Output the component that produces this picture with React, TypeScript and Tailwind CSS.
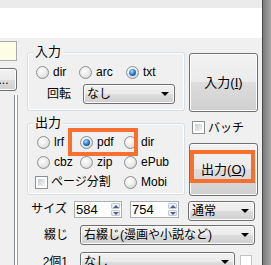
import React from "react";

const btn =
  "border border-[#707070] rounded-[3px] bg-[linear-gradient(#f2f2f2,#ebebeb_50%,#dddddd_50%,#cfcfcf)] shadow-[inset_0_0_0_1px_#fcfcfc]";

function Radio({ label, checked, w }: { label: string; checked?: boolean; w?: string }) {
  return (
    <div className={`flex items-center gap-[4px] h-[20px] ${w ?? ""}`}>
      <span className="w-[13px] h-[13px] shrink-0 rounded-full border border-[#8e8f8f] bg-[radial-gradient(circle_at_40%_35%,#ffffff,#e8e8e8_55%,#c4c4c4)] flex items-center justify-center">
        {checked && (
          <span className="w-[7px] h-[7px] rounded-full bg-[radial-gradient(circle_at_40%_35%,#a4dcff,#1c72c4_55%,#0c3f7a)]" />
        )}
      </span>
      <span>{label}</span>
    </div>
  );
}

function Check({ label }: { label: string }) {
  return (
    <div className="flex items-center gap-[3px] h-[13px]">
      <span className="w-[13px] h-[13px] shrink-0 border border-[#8e8f8f] bg-white p-[2px]">
        <span className="block w-full h-full bg-[linear-gradient(135deg,#c9cdd2,#f4f4f4)]" />
      </span>
      <span>{label}</span>
    </div>
  );
}

function Select({ text, cls }: { text: string; cls: string }) {
  return (
    <div className={`${btn} h-[20px] flex items-center justify-between pl-[3px] pr-[5px] ${cls}`}>
      <span>{text}</span>
      <span className="w-0 h-0 border-x-[4px] border-x-transparent border-t-[4px] border-t-black" />
    </div>
  );
}

function Spin({ value, cls }: { value: string; cls: string }) {
  return (
    <div className={`h-[17px] flex border border-[#abadb3] bg-white ${cls}`}>
      <span className="flex-1 pl-[1px] text-[13px] leading-[15px]">{value}</span>
      <div className="w-[9px] flex flex-col gap-[1px] my-[1px] mr-[1px]">
        <div className="flex-1 flex items-center justify-center border border-[#c3c9d3] rounded-[1px] bg-[linear-gradient(#f5f7fa,#dfe4eb)]">
          <span className="w-0 h-0 border-x-[3px] border-x-transparent border-b-[3px] border-b-[#4d6185]" />
        </div>
        <div className="flex-1 flex items-center justify-center border border-[#c3c9d3] rounded-[1px] bg-[linear-gradient(#f5f7fa,#dfe4eb)]">
          <span className="w-0 h-0 border-x-[3px] border-x-transparent border-t-[3px] border-t-[#4d6185]" />
        </div>
      </div>
    </div>
  );
}

export default function App() {
  return (
    <div className="relative w-[271px] h-[265px] overflow-hidden flex bg-[#f0f0f0] text-[12px] leading-none text-black font-['Liberation_Sans','Noto_Sans_CJK_JP',sans-serif]">
      <div className="w-[262px] flex flex-col shrink-0">
        <div className="h-[8px] shrink-0 bg-[#ebebeb]" />
        <div className="h-[30px] shrink-0 bg-white" />
        <div className="flex flex-1 min-h-0">
          {/* left strip */}
          <div className="w-[18px] shrink-0 flex flex-col">
            <div className="mt-[3px] h-[20px] w-[17px] bg-[#fdfde6] border-y border-r border-[#a9a9a9]" />
            <div className={`mt-[7px] -ml-[10px] w-[27px] h-[23px] flex items-center justify-center ${btn}`}>...</div>
            <div className="mt-[4px] flex-1 w-[18px] border-r border-[#a0a0a0] pr-[2px] bg-white">
              <div className="h-full bg-[#f0f0f0] border-r border-[#828790]" />
            </div>
          </div>

          {/* main */}
          <div className="ml-[9px] w-[231px] flex flex-col">
            <div className="flex">
              <div className="w-[158px] flex flex-col">
                <div className="mt-[14px] border border-[#d5dfe5] rounded-[3px] shadow-[inset_0_0_0_1px_#ffffff] pb-[6px]">
                  <div className="-mt-[8px] ml-[5px] px-[2px] w-fit bg-[#f0f0f0] text-[13px] leading-[14px]">入力</div>
                  <div className="mt-[3px] pl-[8px] flex">
                    <Radio label="dir" w="w-[43px]" />
                    <Radio label="arc" w="w-[47px]" />
                    <Radio label="txt" checked />
                  </div>
                  <div className="mt-[2px] flex items-center">
                    <span className="ml-[19px] w-[36px]">回転</span>
                    <Select text="なし" cls="w-[92px]" />
                  </div>
                </div>

                <div className="mt-[12px] border border-[#d5dfe5] rounded-[3px] shadow-[inset_0_0_0_1px_#ffffff] pb-[2px]">
                  <div className="-mt-[8px] ml-[5px] px-[2px] w-fit bg-[#f0f0f0] text-[13px] leading-[14px]">出力</div>
                  <div className="mt-[2px] pl-[9px] grid grid-cols-[43px_44px_1fr]">
                    <Radio label="lrf" />
                    <Radio label="pdf" checked />
                    <Radio label="dir" />
                    <Radio label="cbz" />
                    <Radio label="zip" />
                    <Radio label="ePub" />
                    <div className="col-span-2 -ml-[2px] flex items-center h-[20px]">
                      <Check label="ページ分割" />
                    </div>
                    <Radio label="Mobi" />
                  </div>
                </div>
              </div>

              <div className="ml-[4px] w-[69px] flex flex-col">
                <div className={`mt-[15px] h-[59px] flex items-center justify-center text-[13px] ${btn}`}>
                  入力(<span className="underline">I</span>)
                </div>
                <div className="mt-[9px] ml-[3px]">
                  <Check label="バッチ" />
                </div>
                <div className={`mt-[9px] h-[53px] flex items-center justify-center text-[13px] ${btn}`}>
                  出力(<span className="underline">O</span>)
                </div>
              </div>
            </div>

            <div className="mt-[5px] flex items-start">
              <span className="w-[40px] text-right leading-[17px]">サイズ</span>
              <Spin value="584" cls="ml-[7px] w-[48px]" />
              <Spin value="754" cls="ml-[8px] w-[49px]" />
              <Select text="通常" cls="ml-[9px] w-[67px]" />
            </div>

            <div className="mt-[4px] flex items-center">
              <span className="w-[41px] text-right">綴じ</span>
              <Select text="右綴じ(漫画や小説など)" cls="ml-[12px] w-[175px]" />
            </div>

            <div className="mt-[7px] flex items-start">
              <span className="w-[41px] text-right leading-[20px]">2個1</span>
              <Select text="なし" cls="ml-[12px] w-[155px]" />
              <div className="ml-[5px] mt-[3px] w-[12px] h-[14px] bg-white border border-[#c4c4c4]" />
            </div>
          </div>
        </div>
      </div>

      <div className="flex-1 border-l border-[#4a4a4a] bg-[linear-gradient(to_right,#7a7a7a,#a6a6a6)]" />

      <div className="absolute left-[68px] top-[128px] w-[70px] h-[28px] border-[4px] border-[#f7702f]" />
      <div className="absolute left-[190px] top-[150px] w-[65px] h-[33px] border-[4px] border-[#f7702f]" />
    </div>
  );
}
